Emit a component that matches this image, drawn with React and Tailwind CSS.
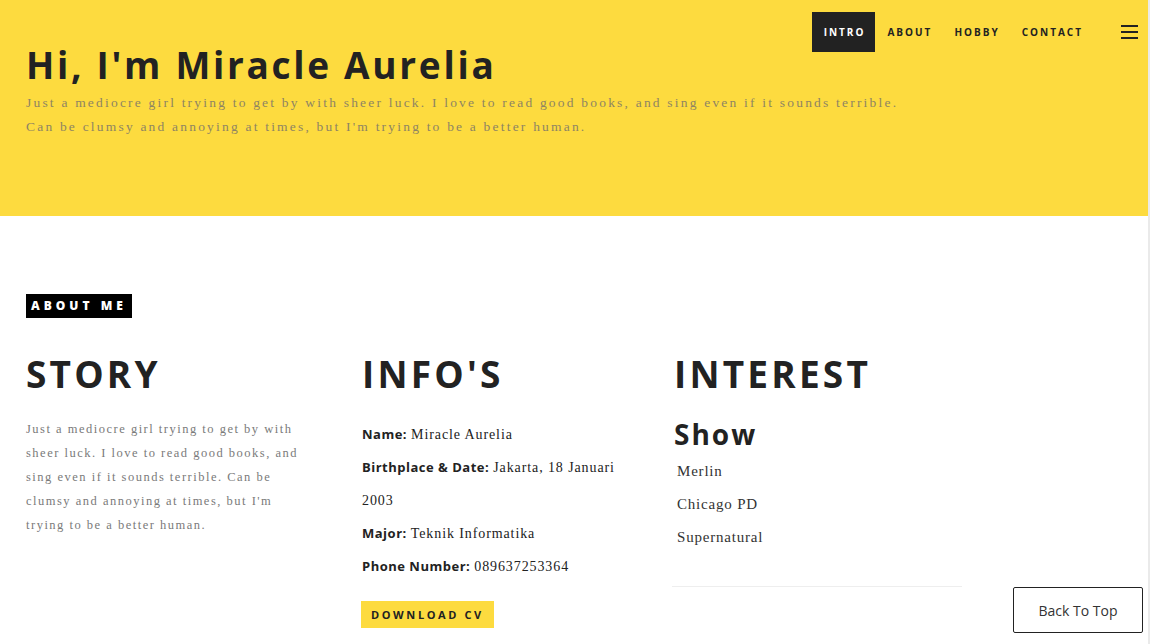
import React from 'react';

const sans = "font-['Open_Sans',sans-serif]";
const serif = "font-['Liberation_Serif',serif]";

const NavBar = () => {
  const links = ['INTRO', 'ABOUT', 'HOBBY', 'CONTACT'];
  return (
    <nav className={`flex items-center justify-end pt-3 pr-[10px] ${sans}`}>
      <ul className="flex items-center">
        {links.map((link, i) => (
          <li key={link}>
            <a
              href="#"
              className={
                i === 0
                  ? 'flex h-10 items-center bg-[#222222] pl-3 pr-[10px] text-[10px] font-bold tracking-[2px] text-white'
                  : 'flex h-10 items-center pl-3 pr-[10px] text-[10px] font-bold tracking-[2px] text-[#222222]'
              }
            >
              {link}
            </a>
          </li>
        ))}
      </ul>
      <button className="ml-[28px] flex h-10 flex-col justify-center gap-[4px]">
        <span className="block h-[2px] w-[17px] bg-[#222222]"></span>
        <span className="block h-[2px] w-[17px] bg-[#222222]"></span>
        <span className="block h-[2px] w-[17px] bg-[#222222]"></span>
      </button>
    </nav>
  );
};

const InfoRow = ({ label, value, tail }) => (
  <p className="text-[13px] leading-[33px] text-[#222222]">
    <span className={`${sans} mr-[4px] font-bold tracking-[0.5px]`}>{label}</span>
    <span className={`${serif} text-[14px] tracking-[0.9px]`}>{value}</span>
    {tail && (
      <>
        {' '}
        <span className={`${serif} text-[14px] tracking-[0.9px]`}>{tail}</span>
      </>
    )}
  </p>
);

const App = () => {
  return (
    <div className="flex min-h-[644px] w-full bg-white">
      <div className="flex-1">
        <header className="h-[216px] bg-[#fddb3f]">
          <NavBar />
          <div className="-mt-[10px] px-[26px]">
            <h1 className={`${sans} text-[37px] font-bold leading-[46px] tracking-[2.7px] text-[#222222]`}>
              Hi, I'm Miracle Aurelia
            </h1>
            <p className={`${serif} mt-[3px] text-[13.5px] leading-[24px] tracking-[2.2px] text-[#8e8463]`}>
              Just a mediocre girl trying to get by with sheer luck. I love to read good books, and sing even if it sounds terrible.
              <br />
              Can be clumsy and annoying at times, but I'm trying to be a better human.
            </p>
          </div>
        </header>

        <main className="px-[26px] pt-[78px]">
          <span className={`${sans} block h-[24px] w-fit bg-black px-[5px] text-[12px] font-extrabold leading-[24px] tracking-[4px] text-white`}>
            ABOUT ME
          </span>

          <div className="mt-[33px] flex">
            <section className="w-[336px]">
              <h2 className={`${sans} text-[37px] font-bold leading-[46px] tracking-[3.2px] text-[#222222]`}>STORY</h2>
              <p className={`${serif} mt-[20px] w-[276px] text-[12.5px] leading-[24px] tracking-[1.5px] text-[#7a7a7a]`}>
                Just a mediocre girl trying to get by with sheer luck. I love to read good books, and sing even if it sounds terrible. Can be clumsy and annoying at times, but I'm trying to be a better human.
              </p>
            </section>

            <section className="w-[312px]">
              <h2 className={`${sans} text-[37px] font-bold leading-[46px] tracking-[3.2px] text-[#222222]`}>INFO'S</h2>
              <div className="mt-[21px] w-[270px]">
                <InfoRow label="Name:" value="Miracle Aurelia" />
                <InfoRow label="Birthplace & Date:" value="Jakarta, 18 Januari" tail="2003" />
                <InfoRow label="Major:" value="Teknik Informatika" />
                <InfoRow label="Phone Number:" value="089637253364" />
              </div>
              <button className={`${sans} -ml-px mt-[18px] h-[27px] bg-[#fddb3f] px-[10px] text-[11px] font-bold leading-[27px] tracking-[2.6px] text-[#222222]`}>
                DOWNLOAD CV
              </button>
            </section>

            <section className="w-[288px]">
              <h2 className={`${sans} text-[37px] font-bold leading-[46px] tracking-[3.2px] text-[#222222]`}>INTEREST</h2>
              <h3 className={`${sans} mt-[19px] text-[28px] font-bold leading-[36px] tracking-[2px] text-[#222222]`}>Show</h3>
              <ul className={`${serif} mt-[3px] pl-[3px] text-[15px] leading-[33px] tracking-[0.8px] text-[#333333]`}>
                <li>Merlin</li>
                <li>Chicago PD</li>
                <li>Supernatural</li>
              </ul>
              <hr className="-ml-[2px] mt-[32px] border-t border-[#eeeeee]" />
            </section>
          </div>
        </main>
      </div>
      <div className="w-[2px] bg-[#eaeaea]"></div>

      <button className={`${sans} fixed bottom-[11px] right-[7px] h-[46px] w-[130px] rounded-[2px] border border-[#222222] bg-white text-[14px] text-[#333333]`}>
        Back To Top
      </button>
    </div>
  );
};

export default App;
